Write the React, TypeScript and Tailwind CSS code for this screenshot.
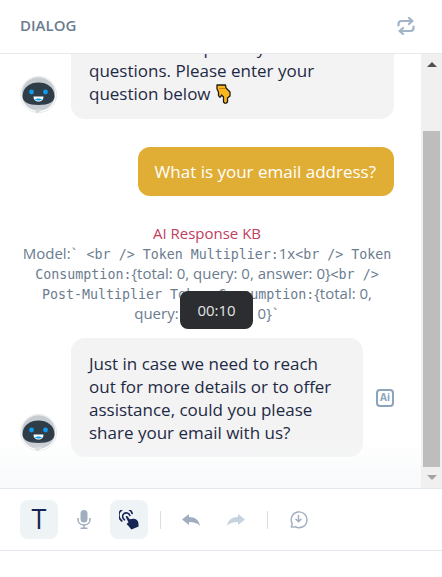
function BotAvatar() {
  return (
    <svg viewBox="0 0 38 38" className="w-[38px] h-[38px] shrink-0">
      <circle cx="18.5" cy="18.5" r="18" fill="#fff" stroke="#e6e8ea" strokeWidth="1" />
      <circle cx="18.5" cy="18" r="16.8" fill="#c6ccd1" />
      <path d="M14 33 L23 33 L17 37.5 Z" fill="#d5d9dc" />
      <path d="M2.5 20 C3 11 10 6.5 18.5 6.5 C27 6.5 34 11 34.5 20 C34.5 26 29 29 18.5 29 C8 29 2.5 26 2.5 20 Z" fill="#2f3d49" />
      <circle cx="11.5" cy="16" r="2.4" fill="#0f9bf0" />
      <circle cx="25.5" cy="16" r="2.4" fill="#0f9bf0" />
      <path d="M13.5 20.5 H23.5 C23.5 24 21.5 25.5 18.5 25.5 C15.5 25.5 13.5 24 13.5 20.5 Z" fill="#fff" />
      <path d="M15 23.3 C16.5 22.2 20.5 22.2 22 23.3 C21 25 16 25 15 23.3 Z" fill="#0f9bf0" />
    </svg>
  );
}

// pointing-down hand, the emoji font is not there so it gets drawn
function PointDown() {
  return (
    <svg viewBox="0 0 15 20" className="inline-block w-[15px] h-[20px] align-[-4px] ml-[1px]">
      <path
        d="M1 1 H9.5 L10 4 L14 8 V12 L11.5 14 V18 L10 19.2 H8.8 L7.5 18 V13 L5.5 11 L4.5 13 H3.5 L2.5 11.5 V8 L1 5 Z"
        fill="#fbb720"
        stroke="#1f1a14"
        strokeWidth="1.3"
        strokeLinejoin="round"
      />
      <path d="M3 4.5 H9.5" stroke="#c5820f" strokeWidth="1" />
    </svg>
  );
}

function TapIcon() {
  return (
    <svg viewBox="0 0 20 20" className="w-[20px] h-[20px]" fill="none">
      <path d="M2.8 11 A6.8 6.8 0 1 1 13.2 3.4" stroke="#172554" strokeWidth="1.6" strokeLinecap="round" />
      <path d="M5.5 9.8 A3.7 3.7 0 1 1 10.8 5.4" stroke="#172554" strokeWidth="1.6" strokeLinecap="round" />
      <path
        d="M6.6 6.4 C7.3 5.6 8.5 5.9 8.9 6.8 L10.6 9.2 L14.5 8.8 C17 8.8 19.2 10.8 19.4 13 L19.6 16.6 L12.4 19.6 C11.2 17.8 9.2 15.4 7.6 14.2 L9 12.6 L9.6 12.8 Z"
        fill="#172554"
      />
    </svg>
  );
}

function ArrowLeft({ className }: { className: string }) {
  return (
    <svg viewBox="0 0 18 12" className={className}>
      <path d="M0 5.5 L7 0 V3 C13 3 17 6 18 12 C15.5 9 12 8 7 8 V11 Z" fill="currentColor" />
    </svg>
  );
}

function DownloadBubble() {
  return (
    <svg viewBox="0 0 20 20" className="w-[19px] h-[19px]" fill="none" stroke="#a0aec0" strokeWidth="1.5">
      <path d="M2.5 18 L3.4 14.4 A8.3 8.3 0 1 1 6.3 17.4 C5.2 17.9 3.8 18.1 2.5 18 Z" strokeLinejoin="round" />
      <path d="M10 5.8 V12.2 M7.4 9.8 L10 12.4 L12.6 9.8" strokeLinecap="round" strokeLinejoin="round" />
    </svg>
  );
}

function MicIcon() {
  return (
    <svg viewBox="0 0 14 19" className="w-[14px] h-[19px]" fill="none">
      <rect x="3.5" y="0" width="7" height="12.5" rx="3.5" fill="#a0aec0" />
      <path d="M1 8 V9.5 C1 12.8 3.6 15 7 15 C10.4 15 13 12.8 13 9.5 V8" stroke="#a0aec0" strokeWidth="1.5" />
      <path d="M7 15 V18 M3.5 18.2 H10.5" stroke="#a0aec0" strokeWidth="1.5" />
    </svg>
  );
}

function RefreshIcon() {
  return (
    <svg viewBox="0 0 18 18" className="w-[18px] h-[18px]" fill="none" stroke="#a3b4c6" strokeWidth="2.2">
      <path d="M1.5 8.5 V7 C1.5 5 2.8 4 4.5 4 H15" strokeLinecap="round" />
      <path d="M12 1 L15.5 4 L12 7" strokeLinecap="round" strokeLinejoin="round" />
      <path d="M16.5 9.5 V11 C16.5 13 15.2 14 13.5 14 H3" strokeLinecap="round" />
      <path d="M6 11 L2.5 14 L6 17" strokeLinecap="round" strokeLinejoin="round" />
    </svg>
  );
}

const mono = "font-['DejaVu_Sans_Mono',monospace] text-[13.3px] leading-none";

export default function App() {
  return (
    <div className="w-[442px] h-[577px] bg-white overflow-hidden flex flex-col font-['Open_Sans',sans-serif]">
      {/* Header */}
      <div className="h-[54px] shrink-0 border-b border-[#e8ebee] flex items-center justify-between pl-[20px] pr-[27px] pb-[2px] rounded-tr-2xl">
        <span className="text-[15px] font-semibold text-[#6b7c8f]">DIALOG</span>
        <RefreshIcon />
      </div>

      <div className="flex h-[434px] shrink-0">
        {/* Messages */}
        <div className="relative w-[421px] overflow-hidden pl-[20px] pr-[27px]">
          <div className="flex items-end gap-[13px] mt-[-26px]">
            <div className="mb-[5px]">
              <BotAvatar />
            </div>
            <div className="flex-1 bg-[#f3f3f4] rounded-[14px] px-[18px] pt-[8px] pb-[14px] text-[17px] leading-[23px] text-[#1e2a44]">
              I'm here to help with your
              <br />
              questions. Please enter your
              <br />
              question below <PointDown />
            </div>
          </div>

          <div className="flex justify-end mt-[28px]">
            <div className="bg-[#e1ae35] text-white text-[17px] leading-[23px] rounded-xl pl-[17px] pr-[18px] py-[13px]">
              What is your email address?
            </div>
          </div>

          <div className="relative mt-[27px] text-center text-[15px] leading-[20px] text-[#6b7c8f]">
            <div className="text-[#c23d5c] font-medium">AI Response KB</div>
            <div>
              Model:<span className={mono}>` &lt;br /&gt; Token Multiplier:</span>1x<span className={mono}>&lt;br /&gt; Token Consumption:</span>
              {"{total: 0, query: 0, answer: 0}"}
              <span className={mono}>&lt;br /&gt; Post-Multiplier Token Consumption:</span>
              {"{total: 0, query: 0, answer: 0}"}
              <span className={mono}>`</span>
            </div>
            <div className="absolute left-[160px] top-[68px] w-[73px] h-[38px] rounded-lg bg-[#2b2d30] text-[#e4e4e4] flex items-center justify-center">
              00:10
            </div>
          </div>

          <div className="flex items-end gap-[13px] mt-[15px]">
            <div className="mb-[5px]">
              <BotAvatar />
            </div>
            <div className="w-[292px] bg-[#f3f3f4] rounded-[14px] px-[18px] pt-[14px] pb-[13px] text-[17px] leading-[23px] text-[#1e2a44]">
              Just in case we need to reach out for more details or to offer assistance, could you please share your email with us?
            </div>
            <div className="self-center w-[18px] h-[18px] rounded-[4px] border-2 border-[#8ba3bb] flex items-center justify-center text-[10px] font-bold text-[#8ba3bb]">
              Ai
            </div>
          </div>

          <div className="absolute left-0 right-0 bottom-0 h-[48px] bg-gradient-to-b from-white/0 to-[#f7f9fa]" />
        </div>

        {/* Scrollbar */}
        <div className="w-[21px] bg-[#f0f0f0] px-[2px] flex flex-col items-center">
          <div className="h-[77px] flex items-start pt-[8px]">
            <div className="w-0 h-0 border-l-[5px] border-r-[5px] border-b-[5px] border-l-transparent border-r-transparent border-b-[#505050]" />
          </div>
          <div className="w-full h-[336px] bg-[#bdbdbd]" />
          <div className="flex-1 flex items-center">
            <div className="w-0 h-0 border-l-[5px] border-r-[5px] border-t-[5px] border-l-transparent border-r-transparent border-t-[#a3a3a3]" />
          </div>
        </div>
      </div>

      {/* Toolbar */}
      <div className="h-[63px] shrink-0 border-t border-b border-[#e2e8ee] flex items-center pl-[20px]">
        <div className="w-[38px] h-[39px] rounded-lg bg-[#eef3f6] flex items-center justify-center text-[27px] text-[#172554]">
          T
        </div>
        <div className="w-[52px] flex justify-center">
          <MicIcon />
        </div>
        <div className="w-[38px] h-[39px] rounded-lg bg-[#eef3f6] flex items-center justify-center">
          <TapIcon />
        </div>
        <div className="w-px h-[18px] bg-[#d8dfe6] ml-[12px]" />
        <ArrowLeft className="w-[18px] h-[12px] text-[#a0aec0] ml-[21px]" />
        <ArrowLeft className="w-[18px] h-[12px] text-[#c6d2de] ml-[27px] -scale-x-100" />
        <div className="w-px h-[18px] bg-[#d8dfe6] ml-[22px]" />
        <div className="ml-[21px]">
          <DownloadBubble />
        </div>
      </div>
    </div>
  );
}
